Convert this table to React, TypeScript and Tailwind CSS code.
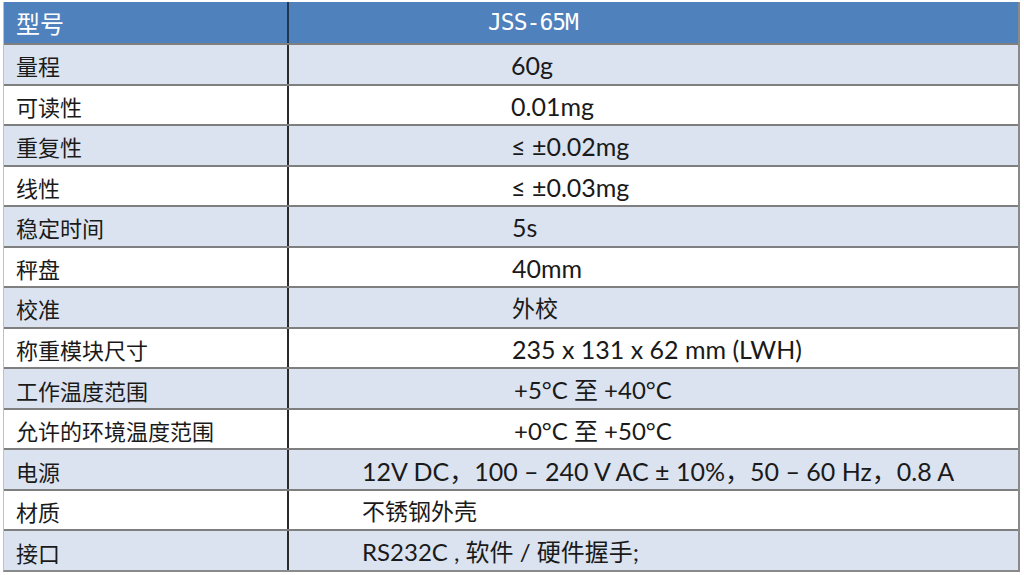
import React from "react";

const rows: { label: string; value: string; pl: string; size: string }[] = [
  { label: "量程", value: "60g", pl: "pl-[222px]", size: "text-[25px]" },
  { label: "可读性", value: "0.01mg", pl: "pl-[222px]", size: "text-[25px]" },
  { label: "重复性", value: "≤ ±0.02mg", pl: "pl-[222px]", size: "text-[25px]" },
  { label: "线性", value: "≤ ±0.03mg", pl: "pl-[222px]", size: "text-[25px]" },
  { label: "稳定时间", value: "5s", pl: "pl-[223px]", size: "text-[25px]" },
  { label: "秤盘", value: "40mm", pl: "pl-[223px]", size: "text-[25px]" },
  { label: "校准", value: "外校", pl: "pl-[223px]", size: "text-[23px]" },
  { label: "称重模块尺寸", value: "235 x 131 x 62 mm (LWH)", pl: "pl-[223px]", size: "text-[25px]" },
  { label: "工作温度范围", value: "+5°C 至 +40°C", pl: "pl-[225px]", size: "text-[24px]" },
  { label: "允许的环境温度范围", value: "+0°C 至 +50°C", pl: "pl-[225px]", size: "text-[24px]" },
  { label: "电源", value: "12V DC，100 – 240 V AC ± 10%，50 – 60 Hz，0.8 A", pl: "pl-[73px]", size: "text-[25px]" },
  { label: "材质", value: "不锈钢外壳", pl: "pl-[73px]", size: "text-[23px]" },
  { label: "接口", value: "RS232C , 软件 / 硬件握手;", pl: "pl-[73px]", size: "text-[24px]" },
];

export default function App() {
  return (
    <div className="w-[1024px] h-[575px] bg-white pt-[2px] pl-[3px] pr-[3px]">
      <div className="w-[1017px] h-[570px] flex flex-col border-l border-l-[#b8c2cf] border-r-2 border-r-[#8a8a8a] border-b-2 border-b-[#8a8a8a]">
        <div className="h-[41px] flex bg-[#4f81bd] text-white shrink-0 leading-none">
          <div
            className="w-[285px] flex items-center pl-[12px] text-[24px] border-r-2 border-r-[#1f3550]"
            style={{ fontFamily: '"Noto Sans CJK SC", sans-serif' }}
          >
            型号
          </div>
          <div
            className="flex-1 flex items-center pl-[199px] text-[23px]"
            style={{ fontFamily: '"DejaVu Sans Mono", "Liberation Mono", monospace' }}
          >
            <span className="tracking-[-1px]">JSS-65M</span>
          </div>
        </div>
        {rows.map((r, i) => (
          <div
            key={r.label}
            className={
              "flex-1 basis-0 min-h-0 overflow-hidden leading-none flex border-t-2 border-t-[#7f7f7f] " +
              (i % 2 === 0 ? "bg-[#dae3ef]" : "bg-white")
            }
          >
            <div
              className="w-[285px] flex items-center pl-[12px] pt-[2px] text-[22px] text-[#1a1a1a] border-r-2 border-r-[#2a2a2a]"
              style={{ fontFamily: '"Noto Sans CJK SC", sans-serif' }}
            >
              {r.label}
            </div>
            <div
              className={"flex-1 flex items-center pt-[3px] text-[#1a1a1a] whitespace-nowrap " + r.size + " " + r.pl}
              style={{ fontFamily: 'Lato, "Noto Sans CJK SC", sans-serif' }}
            >
              {r.value}
            </div>
          </div>
        ))}
      </div>
    </div>
  );
}
